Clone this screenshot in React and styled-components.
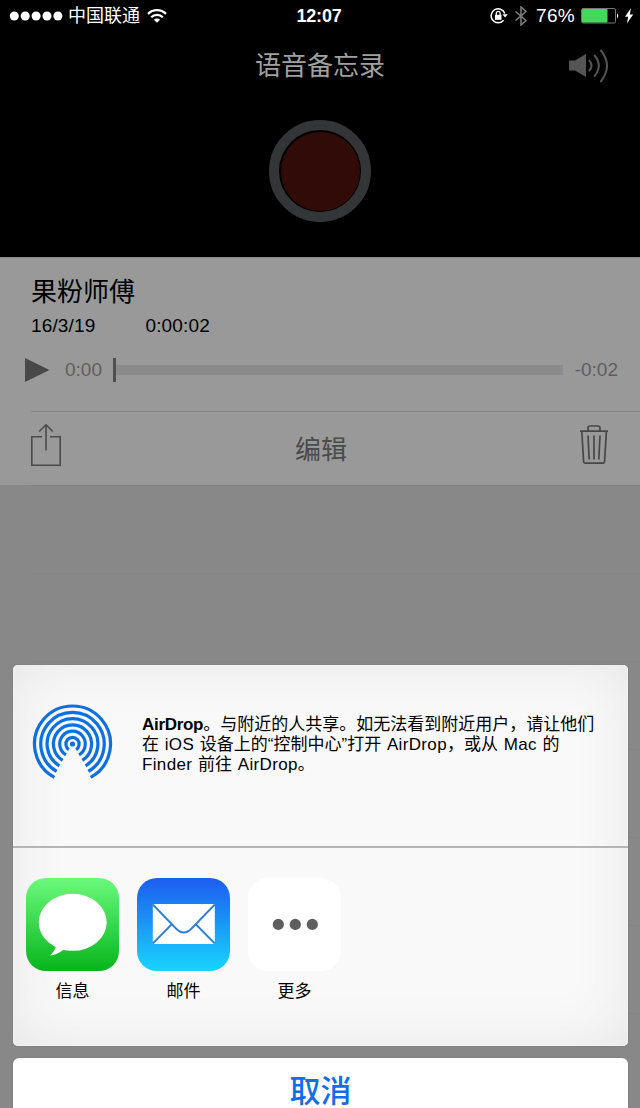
import React from 'react';
import styled, { createGlobalStyle } from 'styled-components';

const GlobalStyle = createGlobalStyle`
  * {
    box-sizing: border-box;
  }
  body {
    margin: 0;
    background: #000;
    overflow: hidden;
  }
`;

const Screen = styled.div`
  position: relative;
  width: 640px;
  height: 1108px;
  overflow: hidden;
  background: #888;
  color: #000;
  font-family: 'Liberation Sans', 'Noto Sans CJK SC', sans-serif;
  display: flex;
  flex-direction: column;
`;

const Header = styled.header`
  height: 257px;
  flex-shrink: 0;
  background: #000;
  display: flex;
  flex-direction: column;
`;

const StatusBar = styled.div`
  height: 32px;
  padding: 0 7px 0 9px;
  display: grid;
  grid-template-columns: 1fr auto 1fr;
  align-items: center;
  color: #fff;
`;

const StatusGroup = styled.div`
  display: flex;
  align-items: center;
  justify-content: ${({ $end }) => ($end ? 'flex-end' : 'flex-start')};
  gap: ${({ $gap }) => $gap || 0}px;
`;

const Carrier = styled.span`
  margin: 0 7px 0 5px;
  font-size: 18px;
  line-height: 32px;
`;

const Clock = styled.span`
  margin-right: 4px;
  font-size: 18px;
  font-weight: bold;
  line-height: 32px;
  letter-spacing: -0.2px;
`;

const Percent = styled.span`
  margin-left: 2px;
  font-size: 19px;
  line-height: 32px;
  letter-spacing: 0.3px;
`;

const TitleBar = styled.div`
  height: 68px;
  padding: 0 31px 0 71px;
  display: grid;
  grid-template-columns: 1fr auto 1fr;
  align-items: center;
  svg {
    justify-self: end;
  }
`;

const Title = styled.h1`
  grid-column: 2;
  margin: 0 0 0 -40px;
  color: #a0a0a0;
  font-size: 26px;
  font-weight: normal;
  line-height: 66px;
`;

const RecordButton = styled.button`
  width: 102px;
  height: 102px;
  margin: 20px auto 0;
  padding: 0;
  border: 10px solid #343536;
  border-radius: 50%;
  background: #000;
  display: grid;
  place-items: center;
  &::after {
    content: '';
    width: 79px;
    height: 79px;
    border-radius: 50%;
    background: #310b07;
  }
`;

const Memo = styled.section`
  height: 228px;
  flex-shrink: 0;
  background: #999;
  border-top: 1px solid #8c8c8c;
`;

const MemoName = styled.div`
  height: 52px;
  padding: 16px 0 0 31px;
  font-size: 26px;
  line-height: 37px;
`;

const MemoMeta = styled.div`
  height: 32px;
  padding-left: 31px;
  display: flex;
  gap: 50px;
  font-size: 19px;
  line-height: 31px;
  letter-spacing: 0.15px;
`;

const Player = styled.div`
  height: 69px;
  padding: 0 22px 13px 25px;
  display: flex;
  align-items: center;
  color: #5e5e5e;
  font-size: 19px;
`;

const Elapsed = styled.span`
  width: 48px;
  margin-left: 15px;
`;

const Track = styled.div`
  width: 450px;
  height: 24px;
  display: flex;
  align-items: center;
  &::before {
    content: '';
    width: 3px;
    height: 24px;
    background: #505050;
  }
  &::after {
    content: '';
    flex: 1;
    height: 10px;
    background: #8b8b8b;
  }
`;

const Remaining = styled.span`
  margin-left: auto;
`;

const Toolbar = styled.div`
  height: 74px;
  margin-left: 31px;
  padding-right: 31px;
  border-top: 1px solid #878787;
  display: flex;
  justify-content: space-between;
  align-items: flex-start;
`;

const EditLabel = styled.span`
  margin-top: 20px;
  color: #4b4b4b;
  font-size: 26px;
  line-height: 37px;
`;

const ToolIcon = styled.svg`
  margin-top: ${({ $top }) => $top}px;
`;

const EmptyRow = styled.div`
  height: ${({ $height }) => $height || 88}px;
  flex-shrink: 0;
  margin-left: 31px;
  border-bottom: 1px solid ${({ $height }) => ($height ? '#808080' : '#838383')};
`;

const Overlay = styled.div`
  position: absolute;
  inset: 665px 12px 0 13px;
  display: flex;
  flex-direction: column;
  gap: 12px;
`;

const Sheet = styled.section`
  height: 381px;
  flex-shrink: 0;
  border-radius: 5px;
  background: #f9f9f9;
  box-shadow: inset 0 0 2px #fff, inset 0 0 55px #e6e6e6, 0 0 2px #747474;
`;

const AirDropPane = styled.div`
  height: 183px;
  padding: 38px 0 0 19px;
  border-bottom: 2px solid #b5b5b5;
  display: flex;
  align-items: flex-start;
`;

const AirDropText = styled.p`
  margin: 12px 0 0 28px;
  font-size: 17px;
  line-height: 20px;
  white-space: nowrap;
  word-spacing: 1px;
  b {
    letter-spacing: -0.3px;
  }
`;

const Latin = styled.span`
  letter-spacing: 0.35px;
`;

const Apps = styled.div`
  padding: 30px 0 0 13px;
  display: flex;
  gap: 18px;
`;

const AppItem = styled.div`
  width: 93px;
  display: flex;
  flex-direction: column;
  align-items: center;
  font-size: 17px;
  line-height: 24px;
  svg {
    margin-bottom: 9px;
  }
`;

const CancelButton = styled.button`
  height: 50px;
  flex-shrink: 0;
  padding: 18px 0 0;
  border: 0;
  border-radius: 6px 6px 0 0;
  background: #fff;
  box-shadow: 0 0 2px #747474;
  color: #0b6ff0;
  font-family: inherit;
  font-size: 31px;
  font-weight: 500;
  line-height: 32px;
`;

const SignalDots = () => (
  <svg width="54" height="12">
    {[0, 1, 2, 3, 4].map((i) => (
      <circle key={i} cx={5.3 + i * 10.9} cy="6" r="4.5" fill="#fff" />
    ))}
  </svg>
);

const WifiIcon = () => (
  <svg width="20" height="16" viewBox="0 0 20 16" fill="none" stroke="#fff">
    <path d="M1 5.9a12.8 12.8 0 0 1 18 0" strokeWidth="2.3" />
    <path d="M4.2 9.2a8.2 8.2 0 0 1 11.6 0" strokeWidth="2.3" />
    <path d="M10 14.8 6.9 11.7a4.4 4.4 0 0 1 6.2 0Z" fill="#fff" stroke="none" />
  </svg>
);

const LockIcon = () => (
  <svg width="18" height="18" viewBox="0 0 18 18" fill="none" stroke="#fff">
    <path d="M14.8 6.5A7 7 0 1 0 13.6 13.2" strokeWidth="1.5" />
    <path d="M12.4 7.2h5.4l-2.7 3.4Z" fill="#fff" stroke="none" />
    <rect x="4.9" y="7.8" width="6.6" height="5" fill="#fff" stroke="none" />
    <path d="M6.3 8V6.2a1.9 1.9 0 0 1 3.8 0V8" strokeWidth="1.3" />
  </svg>
);

const BluetoothIcon = () => (
  <svg width="14" height="20" viewBox="0 0 14 20" fill="none" stroke="#808080" strokeWidth="1.5">
    <path d="m1.5 5.5 10.5 9-5 4.5V1l5 4.5-10.5 9" />
  </svg>
);

const BatteryIcon = () => (
  <svg width="38" height="16" viewBox="0 0 38 16">
    <rect x=".5" y=".5" width="34" height="14.5" rx="1.5" fill="none" stroke="#777" />
    <rect x="1" y="1" width="25.5" height="13.5" rx="1" fill="#43d75c" />
    <path d="M36 5.2q2.6 2.6 0 5.2Z" fill="#fff" />
  </svg>
);

const BoltIcon = () => (
  <svg width="8" height="16" viewBox="0.5 0 8 16" fill="#fff">
    <path d="M6.5 0 .5 8.7h3.2L2.4 15.5 8.6 6.5H5.3Z" />
  </svg>
);

const SpeakerIcon = () => (
  <svg width="40" height="36" viewBox="0 0 40 36" fill="none" stroke="#555" strokeWidth="2">
    <path d="M0 12.5h6L17 6v23L6 22.5H0Z" fill="#555" stroke="none" />
    <path d="M20 12.2q5 5.5 0 11" />
    <path d="M25.2 7q9.2 10.5 0 21.6" />
    <path d="M31.5 1.8q13 16 0 32.2" />
  </svg>
);

const PlayIcon = () => (
  <svg width="25" height="26" viewBox="0 0 25 26">
    <path d="M0 1v24l24.5-12Z" fill="#484848" />
  </svg>
);

const ShareIcon = () => (
  <ToolIcon $top={11} width="32" height="44" fill="none" stroke="#4b4b4b" strokeWidth="1.6">
    <path d="M11 13.8H.8v28.4h28.4V13.8H19M15 27.5V2M8.2 8.5 15 1.8l6.8 6.7" />
  </ToolIcon>
);

const TrashIcon = () => (
  <ToolIcon $top={13} width="30" height="40" viewBox="0 0 30 40" fill="none" stroke="#474747" strokeWidth="1.7">
    <path d="M1 6.2h28M2.8 6.2l1.8 30q.1 2 2 2h17q1.9 0 2-2l1.8-30M9 6V3q0-2 2-2h8q2 0 2 2v3M9 10.5l1.2 24M15 10.5v24M21 10.5l-1.2 24" />
  </ToolIcon>
);

// [radius, half angle in degrees of the opening at the bottom]
const rings = [
  [38, 28.5],
  [31.7, 30],
  [25.4, 31],
  [19.1, 31],
  [12.8, 31],
  [6.6, 33],
];

const AirDropIcon = () => (
  <svg width="82" height="82" viewBox="0.5 0 82 82" fill="none" stroke="#0c6fe2" strokeWidth="3.2">
    {rings.map(([r, deg]) => {
      const angle = (deg * Math.PI) / 180;
      const dx = r * Math.sin(angle);
      const y = 41 + r * Math.cos(angle);
      return <path key={r} d={`M${41 - dx} ${y}A${r} ${r} 0 1 1 ${41 + dx} ${y}`} />;
    })}
    <circle cx="41" cy="41" r="2.6" fill="#0c6fe2" stroke="none" />
  </svg>
);

const MessagesIcon = () => (
  <svg width="93" height="93" viewBox="0 0 93 93">
    <defs>
      <linearGradient id="green" x1="0" y1="0" x2="0" y2="1">
        <stop offset="0" stopColor="#6bfa7c" />
        <stop offset="1" stopColor="#06b51b" />
      </linearGradient>
    </defs>
    <rect width="93" height="93" rx="20" fill="url(#green)" />
    <ellipse cx="46.7" cy="44.3" rx="34" ry="28.5" fill="#fff" />
    <path d="M27 66q3.5 2 2 5-1.5 3.5-5 6.5 7-.5 13.5-5.7L42 66Z" fill="#fff" />
  </svg>
);

const MailIcon = () => (
  <svg width="93" height="93" viewBox="0 0 93 93">
    <defs>
      <linearGradient id="blue" x1="0" y1="0" x2="0" y2="1">
        <stop offset="0" stopColor="#1c5cf0" />
        <stop offset="1" stopColor="#18d5fd" />
      </linearGradient>
    </defs>
    <rect width="93" height="93" rx="20" fill="url(#blue)" />
    <rect x="15.8" y="26" width="62" height="40" fill="#fff" />
    <g fill="none" stroke="#2b80d5" strokeWidth="1.8">
      <path d="M15.8 26.5 39 50.5q7.8 8 15.6 0L77.8 26.5" />
      <path d="M15.8 65.5 34.5 46.5M77.8 65.5 59 46.5" />
    </g>
  </svg>
);

const MoreIcon = () => (
  <svg width="93" height="93" viewBox="0 0 93 93">
    <rect width="93" height="93" rx="20" fill="#fff" />
    {[30.3, 47.3, 64.3].map((x) => (
      <circle key={x} cx={x} cy="46.4" r="5.6" fill="#5e5e5e" />
    ))}
  </svg>
);

const apps = [
  { label: '信息', Icon: MessagesIcon },
  { label: '邮件', Icon: MailIcon },
  { label: '更多', Icon: MoreIcon },
];

const App = () => (
  <Screen>
    <GlobalStyle />
    <Header>
      <StatusBar>
        <StatusGroup>
          <SignalDots />
          <Carrier>中国联通</Carrier>
          <WifiIcon />
        </StatusGroup>
        <Clock>12:07</Clock>
        <StatusGroup $end $gap={6}>
          <LockIcon />
          <BluetoothIcon />
          <Percent>76%</Percent>
          <BatteryIcon />
          <BoltIcon />
        </StatusGroup>
      </StatusBar>
      <TitleBar>
        <Title>语音备忘录</Title>
        <SpeakerIcon />
      </TitleBar>
      <RecordButton aria-label="录音" />
    </Header>
    <Memo>
      <MemoName>果粉师傅</MemoName>
      <MemoMeta>
        <span>16/3/19</span>
        <span>0:00:02</span>
      </MemoMeta>
      <Player>
        <PlayIcon />
        <Elapsed>0:00</Elapsed>
        <Track />
        <Remaining>-0:02</Remaining>
      </Player>
      <Toolbar>
        <ShareIcon />
        <EditLabel>编辑</EditLabel>
        <TrashIcon />
      </Toolbar>
    </Memo>
    <EmptyRow $height={1} />
    {[1, 2, 3, 4, 5, 6].map((row) => (
      <EmptyRow key={row} />
    ))}
    <Overlay>
      <Sheet>
        <AirDropPane>
          <AirDropIcon />
          <AirDropText>
            <b>AirDrop</b>。与附近的人共享。如无法看到附近用户，请让他们
            <br />在 <Latin>iOS</Latin> 设备上的“控制中心”打开 <Latin>AirDrop</Latin>，或从{' '}
            <Latin>Mac</Latin> 的
            <br />
            <Latin>Finder</Latin> 前往 <Latin>AirDrop</Latin>。
          </AirDropText>
        </AirDropPane>
        <Apps>
          {apps.map(({ label, Icon }) => (
            <AppItem key={label}>
              <Icon />
              {label}
            </AppItem>
          ))}
        </Apps>
      </Sheet>
      <CancelButton>取消</CancelButton>
    </Overlay>
  </Screen>
);

export default App;
